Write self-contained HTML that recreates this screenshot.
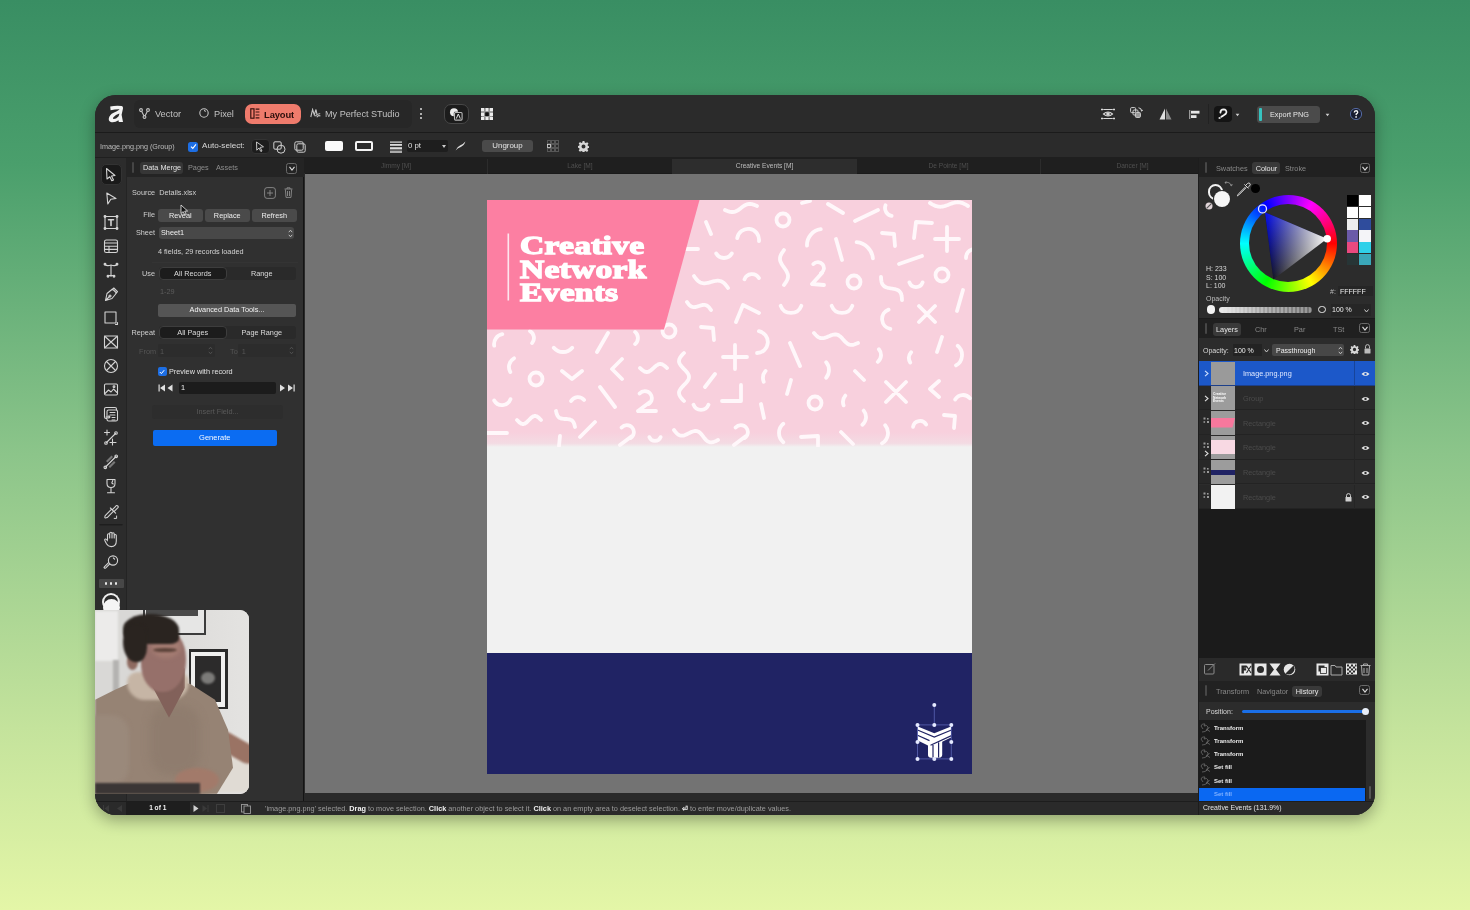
<!DOCTYPE html>
<html><head><meta charset="utf-8">
<style>
*{margin:0;padding:0;box-sizing:border-box}
html,body{width:1470px;height:910px;overflow:hidden}
body{font-family:"Liberation Sans",sans-serif;background:linear-gradient(180deg,#398e63 0%,#4a9f6c 18%,#8cc58a 50%,#c4e39c 80%,#e4f6a7 100%);position:relative;color:#ddd}
.a{position:absolute}
#win{left:95px;top:95px;width:1280px;height:720px;border-radius:21px;overflow:hidden;background:#2b2b2b;box-shadow:0 5px 16px rgba(0,0,0,.33)}
#tb1{left:0;top:0;width:1280px;height:38px;background:#2b2b2b;border-bottom:1px solid #1b1b1b}
#tb2{left:0;top:38px;width:1280px;height:25px;background:#2b2b2b;border-bottom:1px solid #1f1f1f}
#tools{left:0;top:63px;width:31px;height:643px;background:#2c2c2c}
#lp{left:31px;top:63px;width:178px;height:643px;background:#303030;border-right:1px solid #141414}
#canvas{left:209px;top:63px;width:894px;height:643px;background:#737373}
#rp{left:1103px;top:63px;width:177px;height:643px;background:#2c2c2c;border-left:1px solid #1d1d1d}
#status{left:0;top:706px;width:1280px;height:14px;background:#2a2a2a;border-top:1px solid #1d1d1d}
.t{position:absolute;white-space:nowrap;line-height:1;will-change:transform}
</style></head><body>
<div id="win" class="a">
  <div id="tb1" class="a">
    <!-- logo -->
    <svg class="a" style="left:13px;top:10px" width="17" height="18" viewBox="0 0 17 18">
      <path fill="#f4f4f4" fill-rule="evenodd" d="M2.2 1.6 Q8 0.2 13.6 1 Q15.4 1.4 15 3.4 L13.6 9.8 L15 16.9 L10.8 16.9 L10.5 15.2 Q7.2 17.6 3.6 17.2 Q0.4 16.6 0.8 13.4 Q1.4 9.8 5.6 7.8 Q9 6.2 11.6 4.4 Q8 4.2 2.6 5.2 Z M11.4 8.6 Q7.6 9.6 5.4 12.2 Q4.4 13.6 5.6 14 Q7.8 14.2 10.4 11.4 Q11.2 10.2 11.4 8.6 Z"/>
    </svg>
    <div class="a" style="left:39px;top:5px;width:278px;height:28px;background:#272727;border-radius:6px"></div>
    <!-- vector icon -->
    <svg class="a" style="left:44px;top:13px" width="11" height="11" viewBox="0 0 11 11" fill="none" stroke="#c4c4c4" stroke-width="1.1">
      <circle cx="2" cy="2" r="1.4"/><circle cx="9" cy="2" r="1.4"/><circle cx="5.5" cy="9" r="1.4"/>
      <path d="M2.6 3.3 L4.9 7.7 M8.4 3.3 L6.1 7.7"/>
    </svg>
    <div class="t" style="left:60px;top:15px;font-size:9.2px;color:#c2c2c2">Vector</div>
    <svg class="a" style="left:104px;top:13px" width="10" height="10" viewBox="0 0 10 10" fill="none" stroke="#c4c4c4" stroke-width="1.1">
      <circle cx="5" cy="5" r="4.2"/><path d="M5.2 2.2 L6.6 3.6"/>
    </svg>
    <div class="t" style="left:119px;top:15px;font-size:9.2px;color:#c2c2c2">Pixel</div>
    <!-- layout button -->
    <div class="a" style="left:150px;top:8.5px;width:56px;height:20.5px;background:#ef7b6c;border-radius:7px"></div>
    <svg class="a" style="left:155px;top:13px" width="10" height="11" viewBox="0 0 10 11" fill="none" stroke="#3a1410" stroke-width="1.2">
      <rect x="0.8" y="0.8" width="3.2" height="9.4"/><path d="M5.6 1.2 H9.4 M5.6 4 H9.4 M5.6 7 H9.4 M5.6 9.8 H9.4"/>
    </svg>
    <div class="t" style="left:169px;top:15px;font-size:9.4px;color:#2c0f0c;font-weight:bold;letter-spacing:-0.1px">Layout</div>
    <!-- studio icon -->
    <svg class="a" style="left:215px;top:13px" width="11" height="10" viewBox="0 0 11 10" fill="none" stroke="#c4c4c4" stroke-width="1.1">
      <path d="M0.8 9 L2.6 1.5 L4.3 7 L6 1.5 L7 6.6 M5.2 8.2 Q7.5 5.5 10.2 5.8 M6.8 9.2 Q8 7 10.4 8"/>
    </svg>
    <div class="t" style="left:230px;top:15px;font-size:9.1px;color:#c2c2c2">My Perfect STudio</div>
    <!-- dots -->
    <div class="a" style="left:325px;top:13px;width:2.4px;height:2.4px;border-radius:50%;background:#ddd"></div>
    <div class="a" style="left:325px;top:17.5px;width:2.4px;height:2.4px;border-radius:50%;background:#ddd"></div>
    <div class="a" style="left:325px;top:22px;width:2.4px;height:2.4px;border-radius:50%;background:#ddd"></div>
    <!-- assistant box -->
    <div class="a" style="left:349px;top:9px;width:25px;height:20px;background:#1c1c1c;border-radius:7px;border:1px solid #474747"></div>
    <svg class="a" style="left:354px;top:12px" width="14" height="14" viewBox="0 0 14 14">
      <circle cx="5" cy="5.2" r="4" fill="#ececec"/>
      <rect x="4.8" y="4.8" width="9" height="9" rx="1.2" fill="#1c1c1c"/>
      <rect x="5.5" y="5.5" width="7.6" height="7.6" rx="1" fill="#1c1c1c" stroke="#b8b8b8" stroke-width="1.1"/>
      <path d="M7.3 11.6 L9.3 7 L11.3 11.6" stroke="#e0e0e0" stroke-width="1" fill="none"/>
    </svg>
    <!-- grid icon -->
    <svg class="a" style="left:385.8px;top:12.8px" width="12" height="12.4" viewBox="0 0 12 12.4">
      <g fill="#ececec"><rect x="0" y="0" width="3.4" height="3.6"/><rect x="4.3" y="0" width="3.4" height="3.6"/><rect x="8.6" y="0" width="3.4" height="3.6"/>
      <rect x="0" y="4.4" width="3.4" height="3.6"/><rect x="8.6" y="4.4" width="3.4" height="3.6"/>
      <rect x="0" y="8.8" width="3.4" height="3.6"/><rect x="4.3" y="8.8" width="3.4" height="3.6"/><rect x="8.6" y="8.8" width="3.4" height="3.6"/></g>
      <g fill="#aaa"><rect x="3.4" y="0.5" width="0.9" height="11.4"/><rect x="7.7" y="0.5" width="0.9" height="11.4"/><rect x="0.5" y="3.6" width="11" height="0.8"/><rect x="0.5" y="8" width="11" height="0.8"/></g>
      <rect x="4.3" y="4.4" width="3.4" height="3.6" fill="#111"/>
    </svg>
    <!-- right icons -->
    <svg class="a" style="left:1006px;top:13px" width="14" height="12" viewBox="0 0 14 12" fill="none" stroke="#d8d8d8" stroke-width="1">
      <path d="M1 0.5 V2.5 M0 1.5 H2.5 M13 0.5 V2.5 M11.5 1.5 H14 M1 9.5 V11.5 M0 10.5 H2.5 M13 9.5 V11.5 M11.5 10.5 H14 M2.5 1.5 H11.5 M2.5 10.5 H11.5"/>
      <path d="M2.5 6 Q7 2 11.5 6 Q7 10 2.5 6 Z" stroke-width="1.1"/><circle cx="7" cy="6" r="1.3" fill="#d8d8d8"/>
    </svg>
    <svg class="a" style="left:1035px;top:12px" width="13" height="13" viewBox="0 0 13 13" fill="none" stroke="#d0d0d0" stroke-width="1">
      <rect x="0.6" y="0.6" width="5" height="5" rx="1"/><rect x="3" y="3" width="5" height="5" rx="1"/><rect x="5.4" y="5.4" width="5" height="5" rx="1" fill="#9a9a9a"/>
      <path d="M8.5 0.8 Q11.5 1 11.8 4 M10.6 3 L11.8 4.2 L12.8 2.8"/>
    </svg>
    <svg class="a" style="left:1064px;top:13px" width="13" height="12" viewBox="0 0 13 12">
      <path d="M6 0.5 L6 11.5 L0.5 11.5 Z" fill="#e0e0e0"/><path d="M7 0.5 L7 11.5 L12.5 11.5 Z" fill="#8a8a8a"/>
    </svg>
    <svg class="a" style="left:1094px;top:15px" width="11" height="9" viewBox="0 0 11 9">
      <rect x="0" y="0" width="1.3" height="9" fill="#9a9a9a"/><rect x="2" y="0.8" width="8.5" height="2.8" fill="#e6e6e6"/><rect x="2" y="5.2" width="5.5" height="2.8" fill="#e6e6e6"/>
    </svg>
    <div class="a" style="left:1113px;top:9px;width:1px;height:20px;background:#222"></div>
    <div class="a" style="left:1119px;top:11px;width:18px;height:16px;background:#141414;border-radius:4px"></div>
    <svg class="a" style="left:1122px;top:13px" width="12" height="12" viewBox="0 0 12 12" fill="none" stroke="#f0f0f0" stroke-width="1.8" stroke-linecap="round">
      <path d="M3.4 4.6 Q3.6 1.4 6.6 1.4 Q9.6 1.6 9.4 4.4 Q9.2 6 6.8 7.2 L4.4 8.8"/><circle cx="2.6" cy="10" r="0.4" stroke-width="1.4"/>
    </svg>
    <svg class="a" style="left:1140px;top:17.5px" width="5" height="4" viewBox="0 0 5 4"><path d="M0.6 0.8 L4.4 0.8 L2.5 3.2 Z" fill="#cfcfcf"/></svg>
    <!-- export png -->
    <div class="a" style="left:1162px;top:10.5px;width:63px;height:17.5px;background:#4b4b4b;border-radius:3.5px"></div>
    <div class="a" style="left:1163.5px;top:13px;width:3px;height:13px;background:#36c3c0;border-radius:1px"></div>
    <div class="t" style="left:1174.6px;top:15.6px;font-size:7.3px;color:#e6e6e6">Export PNG</div>
    <svg class="a" style="left:1230px;top:17.5px" width="5" height="4" viewBox="0 0 5 4"><path d="M0.6 0.8 L4.4 0.8 L2.5 3.2 Z" fill="#cfcfcf"/></svg>
    <!-- help -->
    <svg class="a" style="left:1254px;top:12px" width="14" height="14" viewBox="0 0 14 14">
      <circle cx="7" cy="7" r="5.6" fill="#181c30" stroke="#5a72b0" stroke-width="0.9"/>
      <path d="M5.3 5.5 Q5.3 3.7 7 3.7 Q8.7 3.7 8.7 5.2 Q8.7 6.3 7.3 7 L7.1 8.2" fill="none" stroke="#f4f4f4" stroke-width="1.4"/><circle cx="7.1" cy="9.9" r="0.85" fill="#f4f4f4"/>
    </svg>
  </div>

  <div id="tb2" class="a">
    <div class="t" style="left:5px;top:9.8px;font-size:7.2px;color:#bdbdbd">Image.png.png (Group)</div>
    <div class="a" style="left:93px;top:8.5px;width:10px;height:10px;background:#1d6ee3;border-radius:2.5px"></div>
    <svg class="a" style="left:94.5px;top:10px" width="7" height="7" viewBox="0 0 7 7"><path d="M1 3.6 L2.8 5.4 L6 1.4" fill="none" stroke="#fff" stroke-width="1.1"/></svg>
    <div class="t" style="left:107px;top:9.3px;font-size:8.1px;color:#dadada">Auto-select:</div>
    <div class="a" style="left:155.5px;top:6px;width:19px;height:14.5px;background:#1d1d1d;border-radius:4px;border:1px solid #333"></div>
    <svg class="a" style="left:160px;top:8px" width="10" height="11" viewBox="0 0 10 11"><path d="M1.5 1 L8.5 5.8 L5.2 6.4 L7 10 L5.8 10.5 L4 7 L1.8 9.2 Z" fill="none" stroke="#d8d8d8" stroke-width="0.9"/></svg>
    <svg class="a" style="left:178px;top:7.5px" width="13" height="13" viewBox="0 0 13 13" fill="none" stroke="#cfcfcf" stroke-width="1"><rect x="0.8" y="0.8" width="7.4" height="7.4" rx="1.2"/><circle cx="8" cy="8.2" r="4"/></svg>
    <svg class="a" style="left:199px;top:7.5px" width="12" height="12" viewBox="0 0 12 12" fill="none" stroke="#cfcfcf" stroke-width="1"><rect x="0.8" y="0.8" width="8.4" height="8.4" rx="1.5"/><rect x="2.8" y="2.8" width="8.4" height="8.4" rx="1.5"/></svg>
    <div class="a" style="left:230px;top:8px;width:18px;height:9.5px;background:#fafafa;border-radius:2px"></div>
    <div class="a" style="left:259.5px;top:8px;width:18px;height:9.5px;border:2px solid #f4f4f4;border-radius:2px"></div>
    <div class="a" style="left:262px;top:12px;width:13px;height:1.5px;background:#2b2b2b"></div>
    <svg class="a" style="left:294.5px;top:7.5px" width="12" height="12" viewBox="0 0 12 12"><rect x="0" y="0.5" width="12" height="1.2" fill="#ddd"/><rect x="0" y="3" width="12" height="1.8" fill="#ddd"/><rect x="0" y="6.2" width="12" height="2.2" fill="#ddd"/><rect x="0" y="9.6" width="12" height="2.4" fill="#aaa"/></svg>
    <div class="a" style="left:311.5px;top:6.5px;width:41px;height:12.5px;background:#1e1e1e;border-radius:2px"></div>
    <div class="t" style="left:313px;top:9.3px;font-size:7.8px;color:#e0e0e0">0 pt</div>
    <svg class="a" style="left:347px;top:11.5px" width="4" height="3" viewBox="0 0 4 3"><path d="M0 0 L2 3 L4 0 Z" fill="#ccc"/></svg>
    <svg class="a" style="left:360px;top:8px" width="11" height="10" viewBox="0 0 11 10"><path d="M0.6 9.4 Q2.5 5.5 5 4.5 Q8 3.5 10.4 0.6 Q9 4.8 5.8 6 Q3 7 0.6 9.4 Z" fill="#ddd"/></svg>
    <div class="a" style="left:387px;top:6.5px;width:51px;height:12.5px;background:#4a4a4a;border-radius:3px"></div>
    <div class="t" style="left:387px;width:51px;text-align:center;top:9.3px;font-size:7.9px;color:#e4e4e4">Ungroup</div>
    <svg class="a" style="left:452px;top:7px" width="12" height="12" viewBox="0 0 12 12" fill="none" stroke="#999" stroke-width="0.8" stroke-dasharray="1 1"><rect x="0.5" y="0.5" width="3" height="3"/><rect x="4.5" y="0.5" width="3" height="3"/><rect x="8.5" y="0.5" width="3" height="3"/><rect x="0.5" y="4.5" width="3" height="3" stroke="#ddd" stroke-dasharray="none"/><rect x="4.5" y="4.5" width="3" height="3"/><rect x="8.5" y="4.5" width="3" height="3"/><rect x="0.5" y="8.5" width="3" height="3"/><rect x="4.5" y="8.5" width="3" height="3"/><rect x="8.5" y="8.5" width="3" height="3"/></svg>
    <svg class="a" style="left:483px;top:7.5px" width="11" height="11" viewBox="0 0 11 11"><path fill="#d6d6d6" fill-rule="evenodd" d="M4.6 0 H6.4 L6.7 1.6 L7.8 2.1 L9.2 1.2 L10.5 2.5 L9.5 3.9 L10 5 L11 5.3 V6.9 L9.9 7.1 L9.4 8.2 L10.3 9.6 L9 10.9 L7.6 10 L6.6 10.4 L6.3 11 H4.7 L4.4 10.4 L3.3 9.9 L2 10.8 L0.7 9.5 L1.6 8.1 L1.1 7 L0 6.7 V5.1 L1.1 4.8 L1.6 3.7 L0.7 2.4 L2 1.1 L3.3 2 L4.3 1.5 Z M5.5 3.5 A2 2 0 1 0 5.5 7.5 A2 2 0 1 0 5.5 3.5 Z"/></svg>
  </div>

  <div id="tools" class="a">
    <div class="a" style="left:5.5px;top:6px;width:21px;height:21px;background:#1a1a1a;border-radius:5px;border:1px solid #333"></div>
    <svg class="a" style="left:0;top:0" width="31" height="643" viewBox="0 0 31 643" fill="none" stroke="#d4d4d4" stroke-width="1.1" stroke-linejoin="round" stroke-linecap="round">
      <!-- move y16 -->
      <path d="M11.5 10.5 L20 17.5 L16.5 18 L18.5 22 L16.8 22.8 L14.8 18.8 L12 21 Z"/>
      <!-- node y40 -->
      <path d="M11.8 35 L21 40.5 L15.8 41.2 L12.8 46 Z"/>
      <!-- frame text y64 -->
      <rect x="10" y="58.5" width="12" height="12"/>
      <circle cx="10" cy="58.5" r="0.9" fill="#d4d4d4"/><circle cx="22" cy="58.5" r="0.9" fill="#d4d4d4"/><circle cx="10" cy="70.5" r="0.9" fill="#d4d4d4"/><circle cx="22" cy="70.5" r="0.9" fill="#d4d4d4"/>
      <path d="M13.5 61.8 H18.5 M16 61.8 V67.5" stroke-width="1.6"/>
      <!-- table y88 -->
      <rect x="9.5" y="82" width="13" height="12.5" rx="1.8"/><path d="M9.5 85 H22.5 M9.5 88.2 H22.5 M9.5 91.4 H22.5 M14 88.2 V94.5"/>
      <!-- artistic text y112 -->
      <path d="M10 106.5 Q12 108.5 16 107 Q20 108.5 22 106.5 M16 107 V118.5 M13 118 Q16 116.5 19 118"/>
      <circle cx="10" cy="106.2" r="0.9" fill="#d4d4d4"/><circle cx="22" cy="106.2" r="0.9" fill="#d4d4d4"/><circle cx="13" cy="118.3" r="0.9" fill="#d4d4d4"/><circle cx="19" cy="118.3" r="0.9" fill="#d4d4d4"/>
      <!-- pen y136 -->
      <path d="M10.5 142.5 L12 135.5 L17.5 131 L21.5 135 L17 140.5 Z M10.5 142.5 L14.5 138.5 M17 131.8 L18.8 130 L22.5 133.7 L20.8 135.5"/><circle cx="15" cy="138" r="1"/>
      <!-- rect y160 -->
      <rect x="10" y="154" width="11" height="11"/><path d="M22.5 164.5 V166.5 H20.5"/>
      <!-- frame X y184 -->
      <rect x="9.5" y="178" width="13" height="12" rx="1"/><path d="M9.5 178 L22.5 190 M22.5 178 L9.5 190"/>
      <!-- circle X y208 -->
      <circle cx="16" cy="208" r="6.5"/><path d="M11.5 203.5 L20.5 212.5 M20.5 203.5 L11.5 212.5"/>
      <!-- image y232 -->
      <rect x="9.5" y="226" width="13" height="11" rx="1.2"/><path d="M10 235.5 L13.5 232 L16 234 L18.5 231 L22 234.5"/><circle cx="19" cy="228.8" r="0.9"/>
      <!-- data merge y256 -->
      <rect x="9.5" y="249.5" width="12" height="11" rx="1.6"/><rect x="12" y="252" width="10.5" height="11" rx="1.6" fill="#262626"/><path d="M15 254.5 H20 M15 257 H20 M17 259.5 H20 M17 262 H20 M11 259 H15 L13.8 257.8 M15 259 L13.8 260.2"/>
      <!-- crop/add node y280 -->
      <path d="M12 272 V277 M9.5 274.5 H14.5 M11.5 284.5 L20.5 275.5 M17.5 281 V287 M15 284.5 H21"/><circle cx="11" cy="285" r="1.3"/><circle cx="21" cy="275" r="1.3"/>
      <!-- knife y304 -->
      <path d="M10.5 309 L21 298.5"/><circle cx="10.3" cy="309.3" r="1.3"/><circle cx="21.2" cy="298.3" r="1.3"/>
      <path d="M11 303 L16.5 297.5 L18 299 L12.5 304.5 Z M15 310 L20.5 304.5 L19 303 L13.5 308.5 Z" fill="#777" stroke="none"/>
      <!-- glass y328 -->
      <path d="M12 321.5 H20 V325.5 Q20 329.5 16 329.5 Q12 329.5 12 325.5 Z M16 329.5 V334.5 M12.5 334.8 H19.5 M17.8 322.5 L16.8 325 L18.2 326"/>
      <!-- eyedropper y352 -->
      <path d="M10.2 357.6 L16.6 351.2 L18.6 353.2 L12.2 359.6 Q10.6 360.2 10 359.8 Q9.6 359.2 10.2 357.6 Z M15.4 350 L20.6 355.2 M17.2 351.8 L20.4 348.6 Q21.6 346.8 22.8 348 Q24 349.2 22.2 350.4 L19 353.6"/>
      <path d="M21.6 358 V360.4 H19.2" stroke-width="1"/>
      <!-- separator y366 -->
      <path d="M5 366.7 H27" stroke="#1e1e1e" stroke-width="1.4"/>
      <!-- hand y381 -->
      <path d="M12.5 381.5 V377 Q12.5 375.8 13.6 375.8 Q14.7 375.8 14.7 377 V380 V375.5 Q14.7 374.2 15.8 374.2 Q17 374.2 17 375.5 V380 V376 Q17 374.8 18.1 374.8 Q19.2 374.8 19.2 376 V380 V377.5 Q19.2 376.5 20.2 376.5 Q21.3 376.5 21.3 377.5 V383 Q21.3 388.6 16.2 388.6 Q13.2 388.6 11.5 385.8 L9.8 382.6 Q9.4 381.5 10.3 381.1 Q11.2 380.8 12.5 382.8"/>
      <!-- zoom y405 -->
      <circle cx="18" cy="402.5" r="4.6"/><path d="M14.8 405.8 L10.8 409.8 Q9.6 410.8 9 409.6 L9.6 408.6 L13.6 404.6 M18.4 400 L19.6 401.2"/>
    </svg>
    <div class="a" style="left:4px;top:421px;width:24.5px;height:9px;background:#474747;border-radius:1px"></div>
    <div class="a" style="left:9.5px;top:424.3px;width:2.6px;height:2.6px;border-radius:50%;background:#e6e6e6"></div>
    <div class="a" style="left:14.7px;top:424.3px;width:2.6px;height:2.6px;border-radius:50%;background:#e6e6e6"></div>
    <div class="a" style="left:19.9px;top:424.3px;width:2.6px;height:2.6px;border-radius:50%;background:#e6e6e6"></div>
    <div class="a" style="left:7px;top:435px;width:18px;height:18px;border-radius:50%;border:2.6px solid #eee;border-bottom-color:transparent"></div>
    <div class="a" style="left:7.5px;top:441px;width:17px;height:17px;border-radius:50%;background:#f4f4f4"></div>
  </div>

  <div id="lp" class="a">
    <div id="lpb" class="a" style="left:0;top:0;width:1px;height:643px;background:#242424"></div>
    <div class="a" style="left:0;top:0;width:178px;height:19px;background:#242424"></div>
    <div class="a" style="left:6px;top:4px;width:2px;height:11px;background:#454545;border-radius:1px"></div>
    <div class="a" style="left:13.5px;top:4px;width:43.5px;height:12px;background:#363636;border-radius:3px"></div>
    <div class="t" style="left:16.5px;top:6.3px;font-size:7.3px;color:#e2e2e2">Data Merge</div>
    <div class="t" style="left:62px;top:6.3px;font-size:7.3px;color:#8d8d8d">Pages</div>
    <div class="t" style="left:90px;top:6.3px;font-size:7.3px;color:#8d8d8d">Assets</div>
    <div class="a" style="left:160px;top:4.5px;width:11px;height:11px;border:1px solid #6a6a6a;border-radius:2.5px"></div>
    <svg class="a" style="left:162.5px;top:7.5px" width="6" height="5" viewBox="0 0 6 5"><path d="M0.5 0.8 L3 4 L5.5 0.8" fill="none" stroke="#ddd" stroke-width="1.1"/></svg>

    <div class="t" style="left:6px;top:31.3px;font-size:7.3px;color:#d0d0d0">Source&nbsp; Details.xlsx</div>
    <svg class="a" style="left:137.5px;top:28.5px" width="12" height="12" viewBox="0 0 12 12" fill="none" stroke="#8c8c8c" stroke-width="0.9"><rect x="0.6" y="0.6" width="10.8" height="10.8" rx="2.5"/><path d="M6 3 V9 M3 6 H9"/></svg>
    <svg class="a" style="left:158px;top:29px" width="9" height="11" viewBox="0 0 9 11" fill="none" stroke="#8c8c8c" stroke-width="0.9"><path d="M0.5 2 H8.5 M3 2 V0.8 H6 V2 M1.4 2.5 L2 10.4 H7 L7.6 2.5 M3.5 4 V9 M5.5 4 V9"/></svg>

    <div class="t" style="left:0;width:29px;text-align:right;top:53.3px;font-size:7.3px;color:#cfcfcf">File</div>
    <div class="a" style="left:32px;top:51px;width:44.5px;height:12.5px;background:#4a4a4a;border-radius:3px"></div>
    <div class="a" style="left:79px;top:51px;width:44.5px;height:12.5px;background:#4a4a4a;border-radius:3px"></div>
    <div class="a" style="left:126px;top:51px;width:44.5px;height:12.5px;background:#4a4a4a;border-radius:3px"></div>
    <div class="t" style="left:32px;width:44.5px;text-align:center;top:53.6px;font-size:7.3px;color:#eee">Reveal</div>
    <div class="t" style="left:79px;width:44.5px;text-align:center;top:53.6px;font-size:7.3px;color:#eee">Replace</div>
    <div class="t" style="left:126px;width:44.5px;text-align:center;top:53.6px;font-size:7.3px;color:#eee">Refresh</div>

    <div class="t" style="left:0;width:29px;text-align:right;top:71.3px;font-size:7.3px;color:#cfcfcf">Sheet</div>
    <div class="a" style="left:33px;top:69px;width:135px;height:12px;background:#484848;border-radius:3px"></div>
    <div class="t" style="left:35px;top:71.3px;font-size:7.3px;color:#f0f0f0">Sheet1</div>
    <svg class="a" style="left:161.5px;top:70.5px" width="5" height="9" viewBox="0 0 5 9" fill="none" stroke="#ccc" stroke-width="0.9"><path d="M0.8 3.2 L2.5 1.2 L4.2 3.2 M0.8 5.8 L2.5 7.8 L4.2 5.8"/></svg>

    <div class="t" style="left:32px;top:89.7px;font-size:7.3px;color:#d2d2d2">4 fields, 29 records loaded</div>
    <div class="a" style="left:26px;top:104px;width:146px;height:1px;background:#343434"></div>

    <div class="t" style="left:0;width:29px;text-align:right;top:111.8px;font-size:7.3px;color:#cfcfcf">Use</div>
    <div class="a" style="left:33px;top:109px;width:137px;height:13px;background:#2a2a2a;border-radius:3px"></div>
    <div class="a" style="left:33px;top:109px;width:67.5px;height:13px;background:#1c1c1c;border:1px solid #3d3d3d;border-radius:4px"></div>
    <div class="t" style="left:33px;width:67.5px;text-align:center;top:111.8px;font-size:7.3px;color:#dcdcdc">All Records</div>
    <div class="t" style="left:100.5px;width:69.5px;text-align:center;top:111.8px;font-size:7.3px;color:#dcdcdc">Range</div>
    <div class="t" style="left:34px;top:129.8px;font-size:7.3px;color:#5c5c5c">1-29</div>

    <div class="a" style="left:32px;top:145.5px;width:138px;height:13px;background:#555;border-radius:2px"></div>
    <div class="t" style="left:32px;width:138px;text-align:center;top:148.3px;font-size:7.3px;color:#f2f2f2">Advanced Data Tools...</div>

    <div class="t" style="left:0;width:29px;text-align:right;top:171.3px;font-size:7.3px;color:#cfcfcf">Repeat</div>
    <div class="a" style="left:33px;top:167.5px;width:137px;height:13.5px;background:#2a2a2a;border-radius:3px"></div>
    <div class="a" style="left:33px;top:167.5px;width:67.5px;height:13.5px;background:#1c1c1c;border:1px solid #3d3d3d;border-radius:4px"></div>
    <div class="t" style="left:33px;width:67.5px;text-align:center;top:171px;font-size:7.3px;color:#dcdcdc">All Pages</div>
    <div class="t" style="left:100.5px;width:69.5px;text-align:center;top:171px;font-size:7.3px;color:#dcdcdc">Page Range</div>

    <div class="a" style="left:32px;top:186px;width:57px;height:13px;background:#2c2c2c;border-radius:2px"></div>
    <div class="a" style="left:112px;top:186px;width:58px;height:13px;background:#2c2c2c;border-radius:2px"></div>
    <div class="t" style="left:12.5px;top:189.5px;font-size:7.3px;color:#555">From&nbsp; 1</div>
    <svg class="a" style="left:82px;top:188px" width="5" height="9" viewBox="0 0 5 9" fill="none" stroke="#555" stroke-width="0.9"><path d="M0.8 3.2 L2.5 1.2 L4.2 3.2 M0.8 5.8 L2.5 7.8 L4.2 5.8"/></svg>
    <div class="t" style="left:103.5px;top:189.5px;font-size:7.3px;color:#555">To&nbsp; 1</div>
    <svg class="a" style="left:163px;top:188px" width="5" height="9" viewBox="0 0 5 9" fill="none" stroke="#555" stroke-width="0.9"><path d="M0.8 3.2 L2.5 1.2 L4.2 3.2 M0.8 5.8 L2.5 7.8 L4.2 5.8"/></svg>

    <div class="a" style="left:32.2px;top:209.4px;width:8.5px;height:8.5px;background:#1d6ee3;border-radius:2px"></div>
    <svg class="a" style="left:33.4px;top:210.6px" width="6" height="6" viewBox="0 0 6 6"><path d="M0.8 3 L2.4 4.6 L5.2 1.2" fill="none" stroke="#fff" stroke-width="1"/></svg>
    <div class="t" style="left:43px;top:210.1px;font-size:7.3px;color:#e0e0e0">Preview with record</div>

    <svg class="a" style="left:31.5px;top:226px" width="17" height="8" viewBox="0 0 17 8" fill="#e0e0e0"><rect x="0.5" y="0.5" width="1.2" height="7"/><path d="M2 4 L7 0.5 V7.5 Z M9.5 4 L14.5 0.5 V7.5 Z"/></svg>
    <div class="a" style="left:53px;top:224px;width:96.5px;height:12px;background:#1c1c1c;border-radius:2px"></div>
    <div class="t" style="left:55px;top:226.4px;font-size:7.3px;color:#eee">1</div>
    <svg class="a" style="left:153px;top:226px" width="17" height="8" viewBox="0 0 17 8" fill="#e0e0e0"><path d="M1 0.5 L6 4 L1 7.5 Z M9 0.5 L14 4 L9 7.5 Z"/><rect x="14.5" y="0.5" width="1.2" height="7"/></svg>

    <div class="a" style="left:26px;top:246.5px;width:131px;height:14px;background:#2d2d2d;border-radius:3px"></div>
    <div class="t" style="left:26px;width:131px;text-align:center;top:249.6px;font-size:7.3px;color:#5a5a5a">Insert Field...</div>

    <div class="a" style="left:27px;top:271.5px;width:123.5px;height:16px;background:#0b6cf2;border-radius:2px"></div>
    <div class="t" style="left:27px;width:123.5px;text-align:center;top:275.6px;font-size:7.5px;color:#f4f8ff">Generate</div>
    <!-- cursor -->
    <svg class="a" style="left:53.8px;top:46px" width="9" height="12" viewBox="0 0 9 12"><path d="M1 1 L1 9.5 L3.2 7.6 L4.8 11 L6.2 10.4 L4.7 7.1 L7.6 7 Z" fill="#111" stroke="#eee" stroke-width="0.8"/></svg>
  </div>

  <div id="canvas" class="a">
    <div class="a" style="left:0;top:0;width:894px;height:16px;background:#1f1f1f;border-bottom:1px solid #1a1a1a"></div>
    <div class="a" style="left:183px;top:1px;width:1px;height:15px;background:#2c2c2c"></div>
    <div class="a" style="left:368px;top:1px;width:185px;height:15px;background:#2d2d2d"></div>
    <div class="a" style="left:736px;top:1px;width:1px;height:15px;background:#2c2c2c"></div>
    <div class="t" style="left:1px;width:182px;text-align:center;top:5.3px;font-size:6.6px;color:#4f4f4f">Jimmy [M]</div>
    <div class="t" style="left:184px;width:184px;text-align:center;top:5.3px;font-size:6.6px;color:#4f4f4f">Lake [M]</div>
    <div class="t" style="left:368px;width:185px;text-align:center;top:5.3px;font-size:6.6px;color:#bdbdbd">Creative Events [M]</div>
    <div class="t" style="left:553px;width:183px;text-align:center;top:5.3px;font-size:6.6px;color:#4f4f4f">De Pointe [M]</div>
    <div class="t" style="left:737px;width:183px;text-align:center;top:5.3px;font-size:6.6px;color:#4f4f4f">Dancer [M]</div>
    <div class="a" style="left:0;top:15px;width:1px;height:620px;background:#2a2a2a"></div>
    <div class="a" style="left:0;top:635px;width:894px;height:8px;background:#2a2a2a"></div>
    <div id="doc" class="a" style="left:183px;top:42px;width:485px;height:574px;background:#f1f1f1;overflow:hidden">
      <div class="a" style="left:0;top:0;width:485px;height:247px;background:linear-gradient(180deg,#f8d0dd 0%,#f8d0dd 94%,#f3dbe3 98.5%,#f1f1f1 100%)"></div>
      <svg class="a" style="left:0;top:0" width="485" height="247" viewBox="0 0 485 247">
        <path d="M238.0 10.0L238.9 10.4L239.7 10.7L240.6 11.1L241.4 11.3L242.3 11.6L243.1 11.8L243.9 12.0L244.8 12.0L245.6 12.0L246.4 12.0L247.2 11.8L248.0 11.6L248.7 11.4L249.5 11.0L250.3 10.6L251.0 10.1L251.8 9.7L252.5 9.1L253.3 8.6L254.0 8.0L254.7 7.4L255.5 6.9L256.2 6.3L257.0 5.9L257.7 5.4L258.5 5.0L259.3 4.6L260.0 4.4L260.8 4.2L261.6 4.0L262.4 4.0L263.2 4.0L264.1 4.0L264.9 4.2L265.7 4.4L266.6 4.7L267.4 4.9L268.3 5.3L269.1 5.6L270.0 6.0M289.5 20.0a6.5 6.5 0 1 0 13.0 0a6.5 6.5 0 1 0 -13.0 0M368.0 21.0L391.0 10.0M427.0 38.0L429.0 22.0L445.0 23.0M448.0 39.0L472.0 39.0M460.0 27.0L460.0 51.0M404.6 15.9A8 8 0 0 1 398.5 5.3M320.0 45.6A16 16 0 0 1 333.8 29.2M349.0 39.0L355.0 60.0M369.6 42.1A18 18 0 0 1 385.9 58.4M395.0 33.0L407.0 34.0L408.0 46.0M219.0 22.0L224.0 34.0M250.2 38.1A11 11 0 0 1 272.0 41.0M244.8 53.5A9 9 0 0 1 229.2 53.5M412.0 64.0L435.0 56.0M479.0 58.0A9 9 0 0 1 484.9 49.5M297.0 50.0L296.4 50.9L295.8 51.8L295.2 52.6L294.6 53.5L294.2 54.4L293.8 55.2L293.4 56.1L293.2 57.0L293.0 57.9L293.0 58.8L293.0 59.6L293.2 60.5L293.4 61.4L293.8 62.2L294.2 63.1L294.6 64.0L295.2 64.9L295.8 65.8L296.4 66.6L297.0 67.5L297.6 68.4L298.2 69.2L298.8 70.1L299.4 71.0L299.8 71.9L300.2 72.8L300.6 73.6L300.8 74.5L301.0 75.4L301.0 76.2L301.0 77.1L300.8 78.0L300.6 78.9L300.2 79.8L299.8 80.6L299.4 81.5L298.8 82.4L298.2 83.2L297.6 84.1L297.0 85.0M326.4 64.1A6 6 0 1 1 334.0 73.2M335.0 73.0L325.0 84.0M325.0 84.0L337.0 85.0M360.5 82.0a6.5 6.5 0 1 0 13.0 0a6.5 6.5 0 1 0 -13.0 0M394.0 77.0L394.1 78.0L394.1 79.0L394.2 79.9L394.4 80.9L394.5 81.8L394.8 82.6L395.0 83.4L395.4 84.2L395.8 84.8L396.3 85.4L396.9 86.0L397.5 86.5L398.2 86.9L399.0 87.2L399.8 87.5L400.7 87.8L401.6 88.0L402.5 88.2L403.5 88.3L404.5 88.5L405.5 88.7L406.5 88.8L407.4 89.0L408.3 89.2L409.2 89.5L410.0 89.8L410.8 90.1L411.5 90.5L412.1 91.0L412.7 91.6L413.2 92.2L413.6 92.8L414.0 93.6L414.2 94.4L414.5 95.2L414.6 96.1L414.8 97.1L414.9 98.0L414.9 99.0L415.0 100.0M435.6 82.4A7 7 0 0 1 422.4 82.4M448.5 75.0a6.5 6.5 0 1 0 13.0 0a6.5 6.5 0 1 0 -13.0 0M476.0 90.0L470.0 111.0M207.0 76.0L207.6 76.9L208.3 77.8L208.9 78.6L209.6 79.4L210.3 80.2L211.0 80.9L211.8 81.5L212.5 82.0L213.3 82.4L214.2 82.8L215.0 83.0L215.9 83.2L216.9 83.3L217.8 83.3L218.8 83.2L219.8 83.0L220.8 82.8L221.9 82.6L222.9 82.3L224.0 82.0L225.1 81.7L226.1 81.4L227.2 81.2L228.2 81.0L229.2 80.8L230.2 80.7L231.1 80.7L232.1 80.8L233.0 81.0L233.8 81.2L234.7 81.6L235.5 82.0L236.2 82.5L237.0 83.1L237.7 83.8L238.4 84.6L239.1 85.4L239.7 86.2L240.4 87.1L241.0 88.0M257.5 79.3A8 8 0 0 1 271.9 78.0M200.0 102.0L200.5 102.6L200.9 103.3L201.4 103.9L201.8 104.5L202.3 105.0L202.8 105.5L203.4 105.9L203.9 106.3L204.5 106.6L205.1 106.8L205.7 107.0L206.3 107.1L207.0 107.1L207.6 107.1L208.3 107.0L209.0 106.9L209.8 106.7L210.5 106.5L211.3 106.2L212.0 106.0L212.7 105.8L213.5 105.5L214.2 105.3L215.0 105.1L215.7 105.0L216.4 104.9L217.0 104.9L217.7 104.9L218.3 105.0L218.9 105.2L219.5 105.4L220.1 105.7L220.6 106.1L221.2 106.5L221.7 107.0L222.2 107.5L222.6 108.1L223.1 108.7L223.5 109.4L224.0 110.0M249.0 122.0L256.0 105.0L272.0 113.0M314.3 105.8A11 11 0 0 1 293.7 105.8M365.3 105.8A11 11 0 0 1 344.7 105.8M403.3 128.8A10 10 0 0 1 401.6 109.6M432.0 106.0L448.0 122.0M448.0 106.0L432.0 122.0M197.0 49.0L211.0 49.0M341.0 4.0L356.0 13.0M443.0 3.0L443.9 3.5L444.8 4.1L445.7 4.6L446.7 5.1L447.6 5.5L448.5 5.9L449.4 6.2L450.4 6.4L451.3 6.6L452.3 6.7L453.2 6.8L454.2 6.7L455.1 6.6L456.1 6.5L457.1 6.2L458.1 6.0L459.0 5.6L460.0 5.3L461.0 4.9L462.0 4.5L463.0 4.1L464.0 3.7L465.0 3.4L465.9 3.0L466.9 2.8L467.9 2.5L468.9 2.4L469.8 2.3L470.8 2.2L471.7 2.3L472.7 2.4L473.6 2.6L474.6 2.8L475.5 3.1L476.4 3.5L477.3 3.9L478.3 4.4L479.2 4.9L480.1 5.5L481.0 6.0M315.0 3.0L323.0 1.0M175.5 131.0a6.5 6.5 0 1 0 13.0 0a6.5 6.5 0 1 0 -13.0 0M214.0 127.0L226.0 128.0L227.0 140.0M271.9 131.2A11 11 0 0 1 270.0 153.0M327.0 133.0L327.9 134.0L328.8 135.0L329.8 136.0L330.8 136.8L331.8 137.4L332.8 137.9L333.9 138.2L335.1 138.2L336.2 138.2L337.5 137.9L338.7 137.5L340.0 137.1L341.2 136.5L342.5 136.0L343.8 135.4L345.1 135.0L346.3 134.7L347.5 134.5L348.7 134.4L349.8 134.6L350.9 134.9L351.9 135.5L352.9 136.2L353.9 137.0L354.8 137.9L355.7 139.0L356.6 140.0L357.6 141.1L358.5 142.0L359.5 142.9L360.4 143.7L361.5 144.2L362.5 144.7L363.6 144.9L364.8 144.9L366.0 144.8L367.2 144.5L368.4 144.0L369.7 143.5L371.0 143.0M303.0 143.0L313.0 166.0M391.9 149.2A9 9 0 0 1 390.8 161.9M423.2 162.5A9 9 0 0 1 424.1 152.2M455.0 137.0L450.0 152.0M470.7 145.8A12 12 0 0 1 469.0 165.4M7.2 145.7A10 10 0 0 1 15.3 134.2M43.0 131.1A8 8 0 0 1 45.1 143.1M85.2 147.7A12 12 0 0 1 66.8 147.7M121.0 133.0L110.0 152.0M148.1 131.9A8 8 0 0 1 148.1 144.1M23.3 172.0A10 10 0 0 1 27.0 158.3M42.5 179.0a6.5 6.5 0 1 0 13.0 0a6.5 6.5 0 1 0 -13.0 0M75.0 171.0L85.0 179.0L95.0 171.0M135.0 159.0L125.0 169.0L135.0 179.0M153.0 168.0L153.7 168.6L154.3 169.2L155.0 169.8L155.7 170.4L156.4 170.8L157.1 171.2L157.7 171.6L158.4 171.8L159.1 172.0L159.8 172.0L160.4 172.0L161.1 171.8L161.8 171.6L162.4 171.2L163.1 170.8L163.8 170.4L164.5 169.8L165.2 169.2L165.8 168.6L166.5 168.0L167.2 167.4L167.8 166.8L168.5 166.2L169.2 165.6L169.9 165.2L170.6 164.8L171.2 164.4L171.9 164.2L172.6 164.0L173.2 164.0L173.9 164.0L174.6 164.2L175.3 164.4L175.9 164.8L176.6 165.2L177.3 165.6L178.0 166.2L178.7 166.8L179.3 167.4L180.0 168.0M197.0 153.0L195.8 154.2L194.7 155.4L193.8 156.6L193.0 157.8L192.4 159.0L192.1 160.2L192.0 161.4L192.2 162.6L192.7 163.8L193.5 165.0L194.4 166.2L195.5 167.4L196.6 168.6L197.8 169.8L198.9 171.0L199.9 172.2L200.8 173.4L201.5 174.6L201.9 175.8L202.0 177.0L201.9 178.2L201.5 179.4L200.8 180.6L199.9 181.8L198.9 183.0L197.8 184.2L196.6 185.4L195.5 186.6L194.4 187.8L193.5 189.0L192.7 190.2L192.2 191.4L192.0 192.6L192.1 193.8L192.4 195.0L193.0 196.2L193.8 197.4L194.7 198.6L195.8 199.8L197.0 201.0M236.0 157.0L260.0 157.0M248.0 145.0L248.0 169.0M228.0 174.0L218.0 187.0M276.7 181.8A11 11 0 0 1 278.6 170.9M339.2 162.3A12 12 0 0 1 339.2 177.7M368.0 171.0L377.0 180.0M399.0 182.0L419.0 202.0M419.0 182.0L399.0 202.0M452.0 181.0L443.0 189.0L452.0 197.0M468.2 199.5A9 9 0 0 1 482.9 198.2M23.5 199.1A9 9 0 0 1 7.2 200.5M84.1 201.0A8 8 0 0 1 97.1 199.9M113.0 187.0L128.0 207.0M152.6 193.5A7 7 0 1 1 161.5 204.1M163.0 202.0L151.0 211.0M151.0 211.0L169.0 211.0M235.0 201.0L254.0 201.0L254.0 185.0M221.5 204.7A8 8 0 0 1 206.5 204.7M274.0 204.0L277.0 218.0M304.0 180.0L300.0 194.0M321.5 203.0a6.5 6.5 0 1 0 13.0 0a6.5 6.5 0 1 0 -13.0 0M356.6 205.4A10 10 0 0 1 358.3 195.6M376.7 210.6A10 10 0 0 1 375.4 224.7M426.1 226.8A7 7 0 0 1 439.1 224.5M457.0 215.0L468.0 216.0L467.0 228.0M30.0 220.0L30.6 220.6L31.2 221.2L31.8 221.8L32.4 222.4L33.0 222.8L33.6 223.2L34.2 223.6L34.8 223.8L35.4 224.0L36.0 224.0L36.6 224.0L37.2 223.8L37.8 223.6L38.4 223.2L39.0 222.8L39.6 222.4L40.2 221.8L40.8 221.2L41.4 220.6L42.0 220.0L42.6 219.4L43.2 218.8L43.8 218.2L44.4 217.6L45.0 217.2L45.6 216.8L46.2 216.4L46.8 216.2L47.4 216.0L48.0 216.0L48.6 216.0L49.2 216.2L49.8 216.4L50.4 216.8L51.0 217.2L51.6 217.6L52.2 218.2L52.8 218.8L53.4 219.4L54.0 220.0M69.0 211.0L69.2 211.8L69.4 212.5L69.5 213.2L69.8 213.9L70.0 214.6L70.3 215.3L70.6 215.8L71.0 216.4L71.4 216.9L71.8 217.3L72.3 217.7L72.9 218.0L73.5 218.2L74.1 218.5L74.8 218.6L75.5 218.7L76.2 218.8L77.0 218.9L77.7 219.0L78.5 219.0L79.3 219.0L80.0 219.1L80.8 219.2L81.5 219.3L82.2 219.4L82.9 219.5L83.5 219.8L84.1 220.0L84.7 220.3L85.2 220.7L85.6 221.1L86.0 221.6L86.4 222.2L86.7 222.7L87.0 223.4L87.2 224.1L87.5 224.8L87.6 225.5L87.8 226.2L88.0 227.0M108.0 222.0L93.0 237.0M134.6 227.5A7 7 0 1 1 143.5 238.1M145.0 236.0L133.0 245.0M187.0 230.0L187.9 231.2L188.8 232.3L189.7 233.3L190.7 234.2L191.7 234.9L192.7 235.4L193.8 235.6L195.0 235.7L196.1 235.6L197.4 235.3L198.6 234.8L199.9 234.2L201.2 233.6L202.5 232.9L203.8 232.3L205.1 231.7L206.4 231.3L207.6 231.0L208.8 231.0L209.9 231.1L211.0 231.5L212.0 232.0L213.0 232.8L213.9 233.7L214.8 234.8L215.7 235.9L216.6 237.1L217.5 238.2L218.4 239.3L219.4 240.3L220.3 241.1L221.4 241.7L222.4 242.1L223.5 242.4L224.7 242.4L225.9 242.2L227.1 241.8L228.4 241.3L229.7 240.7L231.0 240.0M248.6 227.5A7 7 0 1 1 257.5 238.1M259.0 236.0L247.0 245.0M296.3 242.2A12 12 0 0 1 296.3 223.8M314.0 237.0L331.0 236.0L331.0 246.0M354.0 232.0L366.0 244.0M398.2 225.3A12 12 0 0 1 395.0 243.4M0.0 233.0L20.0 233.0M73.0 236.0L72.0 246.0M173.6 237.1A6 6 0 0 1 162.4 237.1" fill="none" stroke="#fff7fa" stroke-width="3.8" stroke-linecap="round" stroke-linejoin="round"/>
      </svg>
      <svg class="a" style="left:0;top:0" width="485" height="140" viewBox="0 0 485 140">
        <path d="M0 0 H212.5 L177 129.5 H0 Z" fill="#fc7fa2"/>
        <rect x="20.5" y="33.5" width="1.6" height="67" fill="#fde6ee"/>
      </svg>
      <div class="t" style="left:33px;top:34px;font-family:'Liberation Serif',serif;font-weight:bold;font-size:25px;line-height:23.6px;color:#fff;-webkit-text-stroke:1.3px #fff;transform:scaleX(1.34);transform-origin:0 0;letter-spacing:0.2px">Creative<br>Network<br>Events</div>
      <div class="a" style="left:0;top:453px;width:485px;height:121px;background:#202364"></div>
      <svg class="a" style="left:423px;top:500px" width="40" height="65" viewBox="910 700 40 65" overflow="visible">
        <path d="M917.8 726.5 L934.3 733.2 L951 726.5 L951 737.5 L942.2 741.8 L942.2 755 Q942 757.5 939 757.8 L931 757.8 Q928 757.5 928 755 L928 745.5 L917.8 740.5 Z" fill="#fff"/>
        <path d="M917.5 730 L934.3 737 L951.5 730 M917.5 735.2 L929.5 740.6 M951.5 735.6 L930.5 745.2 M933 745 V757.5 M938.6 742.5 V757.5" fill="none" stroke="#202364" stroke-width="1.2"/>
        <path d="M917.5 724.9 H951.3 V758.9 H917.5 Z M934.3 705 V724.9" fill="none" stroke="#6f7ad0" stroke-width="0.6"/>
        <g fill="#e4e9ff">
          <circle cx="917.5" cy="724.9" r="2"/><circle cx="934.3" cy="724.9" r="2"/><circle cx="951.3" cy="724.9" r="2"/>
          <circle cx="917.5" cy="742.1" r="2"/><circle cx="951.3" cy="742.1" r="2"/>
          <circle cx="917.5" cy="758.9" r="2"/><circle cx="934.3" cy="758.9" r="2"/><circle cx="951.3" cy="758.9" r="2"/>
          <circle cx="934.3" cy="705" r="2"/>
        </g>
      </svg>
    </div>
  </div>

  <div id="rp" class="a">
    <div class="a" style="left:0;top:0;width:177px;height:19px;background:#212121"></div>
    <div class="a" style="left:6px;top:4px;width:2.4px;height:11px;background:#474747;border-radius:1px"></div>
    <div class="t" style="left:16.6px;top:6.5px;font-size:7.3px;color:#888">Swatches</div>
    <div class="a" style="left:52.7px;top:3.7px;width:28.8px;height:12.3px;background:#393939;border-radius:3px"></div>
    <div class="t" style="left:52.7px;width:28.8px;text-align:center;top:6.5px;font-size:7.3px;color:#e6e6e6">Colour</div>
    <div class="t" style="left:85.8px;top:6.5px;font-size:7.3px;color:#888">Stroke</div>
    <div class="a" style="left:160.5px;top:4.6px;width:10.8px;height:10.8px;border:1px solid #6a6a6a;border-radius:2.5px"></div>
    <svg class="a" style="left:163px;top:7.6px" width="6" height="5" viewBox="0 0 6 5"><path d="M0.5 0.8 L3 4 L5.5 0.8" fill="none" stroke="#ddd" stroke-width="1.1"/></svg>

    <div class="a" style="left:8.5px;top:26px;width:15.5px;height:15.5px;border-radius:50%;border:2.6px solid #f2f2f2"></div>
    <div class="a" style="left:14.8px;top:32.5px;width:16.5px;height:16.5px;border-radius:50%;background:#f6f6f6;box-shadow:0 0 0 1px #2c2c2c"></div>
    <svg class="a" style="left:6px;top:43.5px" width="8" height="8" viewBox="0 0 8 8"><circle cx="4" cy="4" r="3.5" fill="#e0d4d8"/><path d="M1.6 6.4 L6.4 1.6" stroke="#555" stroke-width="1.2"/></svg>
    <svg class="a" style="left:25px;top:23px" width="9" height="9" viewBox="0 0 9 9" fill="none" stroke="#9a9a9a" stroke-width="0.8"><path d="M1 1.5 Q5.5 0.5 7.5 4.5 M6 3.8 L7.6 4.8 L8.2 3 M1 1.5 L2.4 0.6 M1 1.5 L2 2.8"/></svg>
    <svg class="a" style="left:37px;top:22.5px" width="15" height="16" viewBox="0 0 15 16" fill="none" stroke="#d8d8d8" stroke-width="1"><path d="M9.5 4.5 L11.5 2.5 Q13 1.3 14 2.6 Q14.8 3.8 13.4 5 L11.4 7 M8.4 3.4 L12.4 7.4 M9.6 5.8 L3 12.4 Q2 13.4 1.6 14.4 L1.2 15 L1.8 14.6 Q2.8 14.2 3.6 13.2 L10.2 6.6"/></svg>
    <div class="a" style="left:52.3px;top:26.4px;width:8.6px;height:8.6px;border-radius:50%;background:#000"></div>

    <div class="a" style="left:40.5px;top:36.5px;width:97px;height:97px;border-radius:50%;background:conic-gradient(from 90deg,#ff0000,#ffff00,#00ff00,#00ffff,#0000ff,#ff00ff,#ff0000)"></div>
    <div class="a" style="left:50px;top:46px;width:78px;height:78px;border-radius:50%;background:#2c2c2c"></div>
    <svg class="a" style="left:40.5px;top:36.5px" width="97" height="97" viewBox="-48.5 -48.5 97 97">
      <defs>
        <linearGradient id="g1" x1="-26" y1="-34.5" x2="13.3" y2="13.6" gradientUnits="userSpaceOnUse"><stop offset="0" stop-color="#0a14ff"/><stop offset="1" stop-color="#0a14ff" stop-opacity="0"/></linearGradient>
        <linearGradient id="g2" x1="38.7" y1="-4.8" x2="-19.6" y2="-1" gradientUnits="userSpaceOnUse"><stop offset="0" stop-color="#ffffff"/><stop offset="1" stop-color="#ffffff" stop-opacity="0"/></linearGradient>
      </defs>
      <path d="M-23.5 -31.2 L38.7 -4.8 L-15.2 35.9 Z" fill="#0d0d1a"/>
      <path d="M-23.5 -31.2 L38.7 -4.8 L-15.2 35.9 Z" fill="url(#g1)"/>
      <path d="M-23.5 -31.2 L38.7 -4.8 L-15.2 35.9 Z" fill="url(#g2)"/>
      <circle cx="-26" cy="-34.6" r="4" fill="none" stroke="#e6e6ff" stroke-width="1.3"/>
      <circle cx="38.7" cy="-4.8" r="3.8" fill="#fff"/>
    </svg>
    <div class="a" style="left:148.2px;top:36.9px;width:11.3px;height:11.2px;background:#000"></div>
    <div class="a" style="left:160.3px;top:36.9px;width:11.6px;height:11.2px;background:#fff"></div>
    <div class="a" style="left:148.2px;top:48.8px;width:11.3px;height:11.2px;background:#fff"></div>
    <div class="a" style="left:160.3px;top:48.8px;width:11.6px;height:11.2px;background:#fff"></div>
    <div class="a" style="left:148.2px;top:60.6px;width:11.3px;height:11.2px;background:#ededed"></div>
    <div class="a" style="left:160.3px;top:60.6px;width:11.6px;height:11.2px;background:#2f4c9c"></div>
    <div class="a" style="left:148.2px;top:72.4px;width:11.3px;height:11.2px;background:#6b5aa8"></div>
    <div class="a" style="left:160.3px;top:72.4px;width:11.6px;height:11.2px;background:#f4f4f8"></div>
    <div class="a" style="left:148.2px;top:84.3px;width:11.3px;height:11.2px;background:#e9497f"></div>
    <div class="a" style="left:160.3px;top:84.3px;width:11.6px;height:11.2px;background:#2fd0e9"></div>
    <div class="a" style="left:148.2px;top:96.2px;width:11.3px;height:11.2px;background:#273536"></div>
    <div class="a" style="left:160.3px;top:96.2px;width:11.6px;height:11.2px;background:#3aa7b9"></div>
    <div class="t" style="left:6.6px;top:107.2px;font-size:7px;line-height:8.7px;color:#d8d8d8">H: 233<br>S: 100<br>L: 100</div>
    <div class="t" style="left:131.3px;top:129.6px;font-size:7px;color:#bdbdbd">#:</div>
    <div class="a" style="left:139px;top:127.7px;width:34.7px;height:10.5px;background:#262626"></div>
    <div class="t" style="left:141.3px;top:129.6px;font-size:7px;color:#eee">FFFFFF</div>
    <div class="t" style="left:6.6px;top:137px;font-size:7px;color:#bdbdbd">Opacity</div>
    <div class="a" style="left:7.6px;top:147.4px;width:8.4px;height:8.4px;border-radius:50%;background:#f4f4f4"></div>
    <div class="a" style="left:20px;top:149px;width:93px;height:5.5px;border-radius:3px;background:linear-gradient(90deg,#eee,rgba(170,170,170,.5) 55%,rgba(60,60,60,.3)),repeating-linear-gradient(90deg,#888 0 2px,#bbb 2px 4px)"></div>
    <div class="a" style="left:119.2px;top:147.9px;width:7.6px;height:7.6px;border-radius:50%;border:1.3px solid #e8e8e8"></div>
    <div class="a" style="left:131.5px;top:145.5px;width:40px;height:12.5px;background:#262626"></div>
    <div class="t" style="left:133px;top:148.4px;font-size:7px;color:#eee">100 %</div>
    <svg class="a" style="left:164.5px;top:150.5px" width="5" height="4" viewBox="0 0 5 4"><path d="M0.5 0.5 L2.5 3 L4.5 0.5" fill="none" stroke="#ccc" stroke-width="1"/></svg>

    <div class="a" style="left:0;top:160px;width:177px;height:20px;background:#202020;border-top:1px solid #1b1b1b"></div>
    <div class="a" style="left:6px;top:165px;width:2.4px;height:11px;background:#474747;border-radius:1px"></div>
    <div class="a" style="left:14px;top:165.3px;width:28px;height:12.5px;background:#393939;border-radius:3px"></div>
    <div class="t" style="left:14px;width:28px;text-align:center;top:168px;font-size:7.3px;color:#e6e6e6">Layers</div>
    <div class="t" style="left:55.7px;top:168px;font-size:7.3px;color:#888">Chr</div>
    <div class="t" style="left:94.7px;top:168px;font-size:7.3px;color:#888">Par</div>
    <div class="t" style="left:134px;top:168px;font-size:7.3px;color:#888">TSt</div>
    <div class="a" style="left:160px;top:164.5px;width:10.8px;height:10.8px;border:1px solid #6a6a6a;border-radius:2.5px"></div>
    <svg class="a" style="left:162.5px;top:167.5px" width="6" height="5" viewBox="0 0 6 5"><path d="M0.5 0.8 L3 4 L5.5 0.8" fill="none" stroke="#ddd" stroke-width="1.1"/></svg>

    <div class="t" style="left:4px;top:189.2px;font-size:7px;color:#d8d8d8">Opacity:</div>
    <div class="a" style="left:33.8px;top:186px;width:29.7px;height:12px;background:#232323"></div>
    <div class="t" style="left:35px;top:189.2px;font-size:7px;color:#eee">100 %</div>
    <svg class="a" style="left:65px;top:190.5px" width="5" height="4" viewBox="0 0 5 4"><path d="M0.5 0.5 L2.5 3 L4.5 0.5" fill="none" stroke="#ccc" stroke-width="1"/></svg>
    <div class="a" style="left:73.4px;top:186px;width:71.4px;height:12.3px;background:#474747;border-radius:2px"></div>
    <div class="t" style="left:77px;top:189.2px;font-size:7px;color:#eee">Passthrough</div>
    <svg class="a" style="left:138.5px;top:187.5px" width="5" height="9" viewBox="0 0 5 9" fill="none" stroke="#ccc" stroke-width="0.9"><path d="M0.8 3.2 L2.5 1.2 L4.2 3.2 M0.8 5.8 L2.5 7.8 L4.2 5.8"/></svg>
    <svg class="a" style="left:150.5px;top:187px" width="9" height="9" viewBox="0 0 11 11"><path fill="#d6d6d6" fill-rule="evenodd" d="M4.6 0 H6.4 L6.7 1.6 L7.8 2.1 L9.2 1.2 L10.5 2.5 L9.5 3.9 L10 5 L11 5.3 V6.9 L9.9 7.1 L9.4 8.2 L10.3 9.6 L9 10.9 L7.6 10 L6.6 10.4 L6.3 11 H4.7 L4.4 10.4 L3.3 9.9 L2 10.8 L0.7 9.5 L1.6 8.1 L1.1 7 L0 6.7 V5.1 L1.1 4.8 L1.6 3.7 L0.7 2.4 L2 1.1 L3.3 2 L4.3 1.5 Z M5.5 3.5 A2 2 0 1 0 5.5 7.5 A2 2 0 1 0 5.5 3.5 Z"/></svg>
    <svg class="a" style="left:164.5px;top:186px" width="7" height="10" viewBox="0 0 7 10"><path d="M1.5 4.5 V2.8 Q1.5 0.6 3.5 0.6 Q5.5 0.6 5.5 2.8 V4.5" fill="none" stroke="#bbb" stroke-width="1"/><rect x="0.5" y="4.5" width="6" height="5" rx="0.6" fill="#bbb"/></svg>

    <div class="a" style="left:0;top:203.0px;width:176px;height:24.7px;background:#1c58c9;border-bottom:1px solid #1c3f8a"></div>
    <div class="a" style="left:155px;top:203.0px;width:1px;height:24.7px;background:#17449a"></div>
    <div class="t" style="left:44px;top:212.3px;font-size:7.3px;color:#dfe8ff">Image.png.png</div>
    <svg class="a" style="left:161.5px;top:212.8px" width="9" height="6" viewBox="0 0 9 6"><path d="M0.5 3 Q4.5 -1.2 8.5 3 Q4.5 7.2 0.5 3 Z" fill="#e8e8e8"/><circle cx="4.5" cy="3" r="1.2" fill="#1c58c9"/></svg>
    <div class="a" style="left:12.2px;top:203.6px;width:24px;height:23.5px;background:#9a9a9a"></div>
    <svg class="a" style="left:4.5px;top:212.0px" width="5" height="7" viewBox="0 0 5 7"><path d="M1 0.8 L4 3.5 L1 6.2" fill="none" stroke="#cfe0ff" stroke-width="1.1"/></svg>
    <div class="a" style="left:0;top:227.7px;width:176px;height:24.7px;background:#2b2b2b;border-bottom:1px solid #232323"></div>
    <div class="a" style="left:0;top:227.7px;width:12px;height:24.7px;background:#282828;border-bottom:1px solid #232323"></div>
    <div class="a" style="left:155px;top:227.7px;width:1px;height:24.7px;background:#252525"></div>
    <div class="t" style="left:44px;top:237.0px;font-size:7.3px;color:#4b4b4b">Group</div>
    <svg class="a" style="left:161.5px;top:237.5px" width="9" height="6" viewBox="0 0 9 6"><path d="M0.5 3 Q4.5 -1.2 8.5 3 Q4.5 7.2 0.5 3 Z" fill="#e8e8e8"/><circle cx="4.5" cy="3" r="1.2" fill="#2b2b2b"/></svg>
    <div class="a" style="left:12.2px;top:228.3px;width:24px;height:23.5px;background:#9c9c9c"></div>
    <div class="t" style="left:13.5px;top:235.3px;font-size:3.3px;line-height:3.6px;font-weight:bold;color:#fff">Creative<br>Network<br>Events</div>
    <svg class="a" style="left:4.5px;top:236.7px" width="5" height="7" viewBox="0 0 5 7"><path d="M1 0.8 L4 3.5 L1 6.2" fill="none" stroke="#e0e0e0" stroke-width="1.1"/></svg>
    <div class="a" style="left:0;top:252.4px;width:176px;height:24.7px;background:#2b2b2b;border-bottom:1px solid #232323"></div>
    <div class="a" style="left:0;top:252.4px;width:12px;height:24.7px;background:#282828;border-bottom:1px solid #232323"></div>
    <div class="a" style="left:155px;top:252.4px;width:1px;height:24.7px;background:#252525"></div>
    <div class="t" style="left:44px;top:261.7px;font-size:7.3px;color:#4b4b4b">Rectangle</div>
    <svg class="a" style="left:161.5px;top:262.2px" width="9" height="6" viewBox="0 0 9 6"><path d="M0.5 3 Q4.5 -1.2 8.5 3 Q4.5 7.2 0.5 3 Z" fill="#e8e8e8"/><circle cx="4.5" cy="3" r="1.2" fill="#2b2b2b"/></svg>
    <div class="a" style="left:12.2px;top:253.0px;width:24px;height:23.5px;background:#9c9c9c"></div>
    <svg class="a" style="left:12.2px;top:260.0px" width="24" height="10" viewBox="0 0 24 10"><path d="M0 0 H24 L21.5 9.5 H0 Z" fill="#f7789d"/></svg>
    <svg class="a" style="left:3.5px;top:259.4px" width="7" height="7" viewBox="0 0 7 7" fill="#999"><rect x="0.5" y="0.5" width="2" height="2"/><rect x="4" y="1" width="1.6" height="1.6"/><rect x="0.5" y="4.2" width="1.6" height="1.6"/><rect x="4" y="4" width="2" height="2"/></svg>
    <div class="a" style="left:0;top:277.1px;width:176px;height:24.7px;background:#2b2b2b;border-bottom:1px solid #232323"></div>
    <div class="a" style="left:0;top:277.1px;width:12px;height:24.7px;background:#282828;border-bottom:1px solid #232323"></div>
    <div class="a" style="left:155px;top:277.1px;width:1px;height:24.7px;background:#252525"></div>
    <div class="t" style="left:44px;top:286.4px;font-size:7.3px;color:#4b4b4b">Rectangle</div>
    <svg class="a" style="left:161.5px;top:286.9px" width="9" height="6" viewBox="0 0 9 6"><path d="M0.5 3 Q4.5 -1.2 8.5 3 Q4.5 7.2 0.5 3 Z" fill="#e8e8e8"/><circle cx="4.5" cy="3" r="1.2" fill="#2b2b2b"/></svg>
    <div class="a" style="left:12.2px;top:277.7px;width:24px;height:23.5px;background:#9c9c9c"></div>
    <div class="a" style="left:12.2px;top:282.2px;width:24px;height:13.5px;background:#f8d9e3"></div>
    <svg class="a" style="left:3.5px;top:284.1px" width="7" height="7" viewBox="0 0 7 7" fill="#999"><rect x="0.5" y="0.5" width="2" height="2"/><rect x="4" y="1" width="1.6" height="1.6"/><rect x="0.5" y="4.2" width="1.6" height="1.6"/><rect x="4" y="4" width="2" height="2"/></svg>
    <svg class="a" style="left:4.5px;top:292.1px" width="5" height="7" viewBox="0 0 5 7"><path d="M1 0.8 L4 3.5 L1 6.2" fill="none" stroke="#e0e0e0" stroke-width="1.1"/></svg>
    <div class="a" style="left:0;top:301.8px;width:176px;height:24.7px;background:#2b2b2b;border-bottom:1px solid #232323"></div>
    <div class="a" style="left:0;top:301.8px;width:12px;height:24.7px;background:#282828;border-bottom:1px solid #232323"></div>
    <div class="a" style="left:155px;top:301.8px;width:1px;height:24.7px;background:#252525"></div>
    <div class="t" style="left:44px;top:311.1px;font-size:7.3px;color:#4b4b4b">Rectangle</div>
    <svg class="a" style="left:161.5px;top:311.6px" width="9" height="6" viewBox="0 0 9 6"><path d="M0.5 3 Q4.5 -1.2 8.5 3 Q4.5 7.2 0.5 3 Z" fill="#e8e8e8"/><circle cx="4.5" cy="3" r="1.2" fill="#2b2b2b"/></svg>
    <div class="a" style="left:12.2px;top:302.4px;width:24px;height:23.5px;background:#9c9c9c"></div>
    <div class="a" style="left:12.2px;top:311.9px;width:24px;height:5px;background:#202364"></div>
    <svg class="a" style="left:3.5px;top:308.8px" width="7" height="7" viewBox="0 0 7 7" fill="#999"><rect x="0.5" y="0.5" width="2" height="2"/><rect x="4" y="1" width="1.6" height="1.6"/><rect x="0.5" y="4.2" width="1.6" height="1.6"/><rect x="4" y="4" width="2" height="2"/></svg>
    <div class="a" style="left:0;top:326.5px;width:176px;height:24.7px;background:#2b2b2b;border-bottom:1px solid #232323"></div>
    <div class="a" style="left:0;top:326.5px;width:12px;height:24.7px;background:#282828;border-bottom:1px solid #232323"></div>
    <div class="a" style="left:155px;top:326.5px;width:1px;height:24.7px;background:#252525"></div>
    <div class="t" style="left:44px;top:335.8px;font-size:7.3px;color:#4b4b4b">Rectangle</div>
    <svg class="a" style="left:161.5px;top:336.3px" width="9" height="6" viewBox="0 0 9 6"><path d="M0.5 3 Q4.5 -1.2 8.5 3 Q4.5 7.2 0.5 3 Z" fill="#e8e8e8"/><circle cx="4.5" cy="3" r="1.2" fill="#2b2b2b"/></svg>
    <div class="a" style="left:12.2px;top:327.1px;width:24px;height:23.5px;background:#f2f2f2"></div>
    <svg class="a" style="left:3.5px;top:333.5px" width="7" height="7" viewBox="0 0 7 7" fill="#999"><rect x="0.5" y="0.5" width="2" height="2"/><rect x="4" y="1" width="1.6" height="1.6"/><rect x="0.5" y="4.2" width="1.6" height="1.6"/><rect x="4" y="4" width="2" height="2"/></svg>
    <svg class="a" style="left:145.5px;top:334.5px" width="7" height="9" viewBox="0 0 7 9"><path d="M1.5 4 V2.6 Q1.5 0.6 3.5 0.6 Q5.5 0.6 5.5 2.6 V4" fill="none" stroke="#cfcfcf" stroke-width="1"/><rect x="0.5" y="4" width="6" height="4.6" rx="0.6" fill="#cfcfcf"/></svg>

    <div class="a" style="left:0;top:351px;width:177px;height:149px;background:#1b1b1b"></div>
    <div class="a" style="left:0;top:500px;width:177px;height:23px;background:#2a2a2a"></div>
    <svg class="a" style="left:0;top:500px" width="177" height="23" viewBox="0 0 177 23">
      <g fill="none" stroke="#8a8a8a" stroke-width="1"><rect x="5.5" y="6.5" width="9.5" height="9.5" rx="1"/><path d="M9 12.5 L14.5 7 L16 5.5"/></g>
      <g fill="#e8e8e8"><rect x="40.5" y="5.5" width="12" height="12"/><rect x="55.5" y="5.5" width="12" height="12"/><path d="M70.5 5.5 H81.5 L77 11.5 L81.5 17.5 H70.5 L75 11.5 Z"/><circle cx="90.5" cy="11.5" r="5.8"/>
        <rect x="117.5" y="5.5" width="12" height="12"/><rect x="147" y="5.5" width="11" height="11"/></g>
      <g fill="#2a2a2a"><path d="M43 8 H47 V9.2 H44.3 V10.8 H46.6 V12 H44.3 V15 H43 Z M47.5 8 L52 15 M52 8 L47.5 15" stroke="#2a2a2a" stroke-width="1.1"/><circle cx="61.5" cy="11.5" r="3.5"/><path d="M86.5 15.5 L94.5 7.5 A5.8 5.8 0 0 1 86.5 15.5 Z" fill="#2a2a2a"/>
        <rect x="119.5" y="7.5" width="6" height="6"/>
        <rect x="148" y="6.5" width="2" height="2"/><rect x="152" y="6.5" width="2" height="2"/><rect x="156" y="6.5" width="1.5" height="2"/><rect x="150" y="8.5" width="2" height="2"/><rect x="154" y="8.5" width="2" height="2"/><rect x="148" y="10.5" width="2" height="2"/><rect x="152" y="10.5" width="2" height="2"/><rect x="156" y="10.5" width="1.5" height="2"/><rect x="150" y="12.5" width="2" height="2"/><rect x="154" y="12.5" width="2" height="2"/><rect x="148" y="14.5" width="2" height="1.5"/><rect x="152" y="14.5" width="2" height="1.5"/></g>
      <rect x="121.5" y="9.5" width="6" height="6" fill="#e8e8e8" stroke="#2a2a2a" stroke-width="0.8"/>
      <g fill="none" stroke="#aaa" stroke-width="1"><path d="M132 7.5 H136 L137 9 H143 V17 H132 Z"/><path d="M161.5 7.5 H171.5 M164.5 7.5 V6 H168.5 V7.5 M162.5 8 L163.2 17 H169.8 L170.5 8 M165 10 V15 M168 10 V15"/></g>
    </svg>
    <div class="a" style="left:0;top:522.7px;width:177px;height:21px;background:#222"></div>
    <div class="a" style="left:6px;top:527px;width:2.4px;height:11px;background:#474747;border-radius:1px"></div>
    <div class="t" style="left:17px;top:530px;font-size:7.3px;color:#888">Transform</div>
    <div class="t" style="left:57.8px;top:530px;font-size:7.3px;color:#888">Navigator</div>
    <div class="a" style="left:93.3px;top:527.5px;width:30.2px;height:11.3px;background:#393939;border-radius:3px"></div>
    <div class="t" style="left:93.3px;width:30.2px;text-align:center;top:530px;font-size:7.3px;color:#e6e6e6">History</div>
    <div class="a" style="left:160px;top:526.5px;width:10.8px;height:10.8px;border:1px solid #6a6a6a;border-radius:2.5px"></div>
    <svg class="a" style="left:162.5px;top:529.5px" width="6" height="5" viewBox="0 0 6 5"><path d="M0.5 0.8 L3 4 L5.5 0.8" fill="none" stroke="#ddd" stroke-width="1.1"/></svg>
    <div class="t" style="left:6.6px;top:550.3px;font-size:7px;color:#d8d8d8">Position:</div>
    <div class="a" style="left:43px;top:551.8px;width:126px;height:3.6px;background:#1a6fe8;border-radius:2px"></div>
    <div class="a" style="left:162.8px;top:550px;width:7.2px;height:7.2px;border-radius:50%;background:#e8eef8"></div>
    <div class="a" style="left:0;top:562.4px;width:167px;height:80.5px;background:#1b1b1b"></div>
    <div class="a" style="left:170px;top:628px;width:2px;height:13px;background:#555;border-radius:1px"></div>
    <svg class="a" style="left:0.8px;top:564.7px" width="11" height="10" viewBox="0 0 11 10" fill="none" stroke="#6a6a6a" stroke-width="0.8"><path d="M1 3 L2.5 1 H5 L4 3 M4 3 Q7 1.5 8 4 Q8.5 7 5 8.5 L2 9 M1 3 L3 6 M6 6 L10 8.5 M6 8 L9.5 4"/></svg>
    <div class="t" style="left:15px;top:566.6px;font-size:6.0px;font-weight:bold;color:#ececec">Transform</div>
    <svg class="a" style="left:0.8px;top:578.0px" width="11" height="10" viewBox="0 0 11 10" fill="none" stroke="#6a6a6a" stroke-width="0.8"><path d="M1 3 L2.5 1 H5 L4 3 M4 3 Q7 1.5 8 4 Q8.5 7 5 8.5 L2 9 M1 3 L3 6 M6 6 L10 8.5 M6 8 L9.5 4"/></svg>
    <div class="t" style="left:15px;top:579.9px;font-size:6.0px;font-weight:bold;color:#ececec">Transform</div>
    <svg class="a" style="left:0.8px;top:591.2px" width="11" height="10" viewBox="0 0 11 10" fill="none" stroke="#6a6a6a" stroke-width="0.8"><path d="M1 3 L2.5 1 H5 L4 3 M4 3 Q7 1.5 8 4 Q8.5 7 5 8.5 L2 9 M1 3 L3 6 M6 6 L10 8.5 M6 8 L9.5 4"/></svg>
    <div class="t" style="left:15px;top:593.1px;font-size:6.0px;font-weight:bold;color:#ececec">Transform</div>
    <svg class="a" style="left:0.8px;top:604.5px" width="11" height="10" viewBox="0 0 11 10" fill="none" stroke="#6a6a6a" stroke-width="0.8"><path d="M1 3 L2.5 1 H5 L4 3 M4 3 Q7 1.5 8 4 Q8.5 7 5 8.5 L2 9 M1 3 L3 6 M6 6 L10 8.5 M6 8 L9.5 4"/></svg>
    <div class="t" style="left:15px;top:606.4px;font-size:6.0px;font-weight:bold;color:#ececec">Set fill</div>
    <svg class="a" style="left:0.8px;top:617.8px" width="11" height="10" viewBox="0 0 11 10" fill="none" stroke="#6a6a6a" stroke-width="0.8"><path d="M1 3 L2.5 1 H5 L4 3 M4 3 Q7 1.5 8 4 Q8.5 7 5 8.5 L2 9 M1 3 L3 6 M6 6 L10 8.5 M6 8 L9.5 4"/></svg>
    <div class="t" style="left:15px;top:619.7px;font-size:6.0px;font-weight:bold;color:#ececec">Set fill</div>
    <div class="a" style="left:0;top:629.6px;width:166px;height:13px;background:#0a68f2"></div>
    <div class="t" style="left:15px;top:633.0px;font-size:6.0px;font-weight:bold;color:#7fb0ff">Set fill</div>
  </div>

  <div id="status" class="a">
    <svg class="a" style="left:8px;top:3px" width="30" height="7" viewBox="0 0 30 7" fill="#3a3a3a"><rect x="0" y="0" width="1" height="7"/><path d="M1.5 3.5 L6 0 V7 Z M14 3.5 L19 0 V7 Z"/></svg>
    <div class="a" style="left:31px;top:0px;width:63.5px;height:13px;background:#1e1e1e"></div>
    <div class="t" style="left:31px;width:63.5px;text-align:center;top:3.4px;font-size:6.6px;font-weight:bold;color:#f2f2f2">1 of 1</div>
    <svg class="a" style="left:97.5px;top:3px" width="6" height="7" viewBox="0 0 6 7"><path d="M0.5 0 L5.5 3.5 L0.5 7 Z" fill="#cfcfcf"/></svg>
    <svg class="a" style="left:107px;top:3px" width="7" height="7" viewBox="0 0 7 7" fill="#3a3a3a"><path d="M0.5 0 L5 3.5 L0.5 7 Z"/><rect x="5.5" y="0" width="1" height="7"/></svg>
    <svg class="a" style="left:121px;top:2px" width="9" height="9" viewBox="0 0 9 9"><rect x="0.5" y="0.5" width="8" height="8" fill="none" stroke="#3e3e3e"/></svg>
    <svg class="a" style="left:146px;top:1.5px" width="10" height="10" viewBox="0 0 10 10" fill="none" stroke="#9a9a9a" stroke-width="0.9"><rect x="0.5" y="0.5" width="6" height="7.5"/><rect x="3" y="2" width="6.5" height="7.5" fill="#2a2a2a"/></svg>
    <div class="t" style="left:169.5px;top:3px;font-size:7.3px;color:#9c9c9c">'image.png.png' selected. <b style="color:#f0f0f0">Drag</b> to move selection. <b style="color:#f0f0f0">Click</b> another object to select it. <b style="color:#f0f0f0">Click</b> on an empty area to deselect selection. <b style="color:#f0f0f0">&#x23CE;</b> to enter move/duplicate values.</div>
    <div class="a" style="left:1103px;top:0;width:1px;height:15px;background:#1d1d1d"></div>
    <div class="t" style="left:1108px;top:3.2px;font-size:6.9px;color:#e4e4e4">Creative Events (131.9%)</div>
  </div>

  <div id="video" class="a" style="left:0;top:514.7px;width:154px;height:184px;border-radius:0 9px 9px 0;overflow:hidden;background:#d9d8d6">
    <div class="a" style="left:50px;top:0;width:104px;height:184px;background:linear-gradient(90deg,#d9d8d6,#e4e3e1)"></div>
    <!-- lamp -->
    <div class="a" style="left:0;top:1px;width:23px;height:50px;background:#ecebea;filter:blur(1px)"></div>
    <div class="a" style="left:18px;top:50px;width:6px;height:32px;background:#b4b3b1;filter:blur(1px)"></div>
    <!-- top frame -->
    <div class="a" style="left:48px;top:-3px;width:63px;height:28px;border:2px solid #3c3c3c;background:#e6e6e5;filter:blur(0.4px)"></div>
    <div class="a" style="left:51px;top:0;width:52px;height:6px;background:#4a4a4a;filter:blur(0.6px)"></div>
    <!-- black frame -->
    <div class="a" style="left:93.5px;top:39.5px;width:39px;height:60px;background:#2a2a2a;filter:blur(0.4px)"></div>
    <div class="a" style="left:96px;top:42px;width:34px;height:55px;background:#f0f0ef"></div>
    <div class="a" style="left:100px;top:46px;width:26px;height:46px;background:#2c2b2b"></div>
    <div class="a" style="left:106px;top:62px;width:14px;height:12px;border-radius:50%;background:#7c7b79;filter:blur(1px)"></div>
    <!-- desk -->
    <div class="a" style="left:102px;top:132px;width:60px;height:50px;background:#e0dbd4;filter:blur(1px)"></div>
    <!-- right arm -->
    <div class="a" style="left:118px;top:128px;width:46px;height:19px;background:#9a7364;border-radius:10px;transform:rotate(30deg);filter:blur(1.2px)"></div>
    <!-- shirt body -->
    <div class="a" style="left:0;top:68px;width:154px;height:120px;background:#968374;clip-path:polygon(0 22px,20px 12px,42px 2px,95px 6px,120px 22px,133px 52px,138px 90px,122px 116px,0 118px);filter:blur(1.2px)"></div>
    <div class="a" style="left:0;top:105px;width:34px;height:70px;background:#9a897b;border-radius:0 18px 18px 0;filter:blur(2px)"></div>
    <div class="a" style="left:55px;top:95px;width:50px;height:70px;background:#8b796b;border-radius:20px;filter:blur(4px);opacity:.6"></div>
    <!-- collar/neck -->
    <div class="a" style="left:32px;top:62px;width:62px;height:28px;background:#c6b5a5;border-radius:14px 14px 24px 24px;filter:blur(1.5px)"></div>
    <div class="a" style="left:50px;top:58px;width:40px;height:50px;background:#82615a;clip-path:polygon(0 0,100% 0,100% 40%,60% 100%,20% 40%);filter:blur(1.2px)"></div>
    <!-- face -->
    <div class="a" style="left:46px;top:20px;width:45px;height:62px;background:#96706a;border-radius:40% 45% 50% 45%;filter:blur(1.2px)"></div>
    <div class="a" style="left:56px;top:26px;width:30px;height:22px;background:#a47c72;border-radius:50%;filter:blur(2px)"></div>
    <div class="a" style="left:32px;top:44px;width:11px;height:16px;background:#8e6a60;border-radius:50%;filter:blur(1px)"></div>
    <!-- hair -->
    <div class="a" style="left:28px;top:4px;width:56px;height:30px;background:#2a2420;border-radius:55% 60% 20% 45%;filter:blur(1px)"></div>
    <div class="a" style="left:28px;top:14px;width:24px;height:38px;background:#2a2420;border-radius:50% 30% 40% 55%;filter:blur(1px)"></div>
    <div class="a" style="left:58px;top:38px;width:24px;height:4px;background:#5b4239;border-radius:50%;filter:blur(1px)"></div>
    <!-- hands -->
    <div class="a" style="left:80px;top:158px;width:44px;height:24px;background:#a27a6a;border-radius:50%;filter:blur(1.5px)"></div>
    <!-- bottom dark -->
    <div class="a" style="left:0;top:173px;width:105px;height:11px;background:#3b3635;filter:blur(1.2px)"></div>
  </div>

</div>
</body></html>
